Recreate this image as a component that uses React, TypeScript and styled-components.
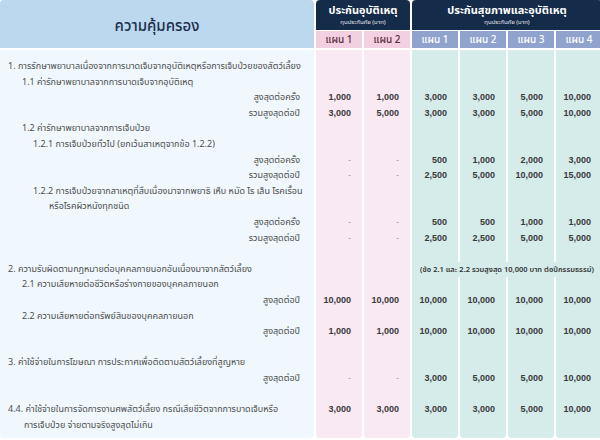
import React from 'react';
import styled, { createGlobalStyle } from 'styled-components';

const GlobalStyle = createGlobalStyle`
  html, body {
    margin: 0;
    padding: 0;
    background: #ffffff;
    overflow: hidden;
  }
  body {
    width: 600px;
    height: 440px;
    font-family: "Noto Sans Thai", "Noto Sans", "Liberation Sans", sans-serif;
  }
`;

type Kind = 'label' | 'accident' | 'health';

const COLUMNS = '314px repeat(6, 46px)';

const Page = styled.div`
  width: 602px;
  display: flex;
  flex-direction: column;
  gap: 2px;
`;

const Head = styled.div`
  display: grid;
  grid-template-columns: ${COLUMNS};
  grid-template-rows: 30px 17px;
  column-gap: 2px;
  row-gap: 1px;
`;

const TitleCell = styled.div`
  grid-row: 1 / span 2;
  background: #bcd8ee;
  border-radius: 4px 4px 0 0;
  display: flex;
  align-items: center;
  justify-content: center;
  padding-top: 5px;
  font-size: 15px;
  font-weight: 500;
  color: #1c2f4d;
`;

const GroupCell = styled.div<{ $span: number }>`
  grid-column: span ${(p) => p.$span};
  background: #142b4a;
  border-radius: 4px 4px 0 0;
  color: #ffffff;
  display: flex;
  flex-direction: column;
  align-items: center;
  justify-content: center;
  gap: 1px;
  padding-top: 1px;
`;

const GroupTitle = styled.div`
  font-size: 11px;
  font-weight: 700;
  line-height: 14px;
`;

const GroupSub = styled.div`
  font-size: 6px;
  line-height: 8px;
  opacity: 0.9;
`;

const PlanCell = styled.div<{ $kind: Kind }>`
  background: ${(p) => (p.$kind === 'accident' ? '#f2d0e1' : '#8fa3cd')};
  color: ${(p) => (p.$kind === 'accident' ? '#5c2a3d' : '#ffffff')};
  display: flex;
  align-items: center;
  justify-content: center;
  font-size: 10px;
  font-weight: 500;
`;

const Body = styled.div<{ $rows: number }>`
  display: grid;
  grid-template-columns: ${COLUMNS};
  grid-template-rows: 9px repeat(${(p) => p.$rows}, 15.6px) 5px;
  column-gap: 2px;
`;

const bg = (k: Kind) =>
  k === 'label' ? '#f0f8fd' : k === 'accident' ? '#f8e9f2' : '#d6eceb';

const Spacer = styled.div<{ $kind: Kind; $last?: boolean }>`
  background: ${(p) => bg(p.$kind)};
  border-radius: ${(p) => (p.$last ? '0 0 4px 4px' : '0')};
`;

const Label = styled.div<{ $indent: number; $right?: boolean }>`
  background: ${bg('label')};
  padding-left: ${(p) => p.$indent}px;
  padding-right: 14px;
  text-align: ${(p) => (p.$right ? 'right' : 'left')};
  font-size: 9px;
  line-height: 15.6px;
  color: #4d4d4d;
  white-space: nowrap;
  overflow: hidden;
`;

const Value = styled.div<{ $kind: Kind; $dash?: boolean }>`
  background: ${(p) => bg(p.$kind)};
  padding-right: 11px;
  text-align: right;
  font-family: "Liberation Sans", Arial, sans-serif;
  font-size: 9px;
  font-weight: ${(p) => (p.$dash ? 400 : 700)};
  line-height: 15.6px;
  color: ${(p) => (p.$dash ? '#9a9a9a' : '#3a3a3a')};
`;

const Note = styled.div`
  grid-column: span 4;
  background: ${bg('health')};
  text-align: center;
  font-size: 7.5px;
  font-weight: 600;
  line-height: 15.6px;
  color: #333333;
  white-space: nowrap;
`;

type Line = {
  label?: string;
  indent?: number;
  right?: boolean;
  values?: string[];
  note?: string;
};

const lines: Line[] = [
  { label: '1. การรักษาพยาบาลเนื่องจากการบาดเจ็บจากอุบัติเหตุหรือการเจ็บป่วยของสัตว์เลี้ยง', indent: 8 },
  { label: '1.1 ค่ารักษาพยาบาลจากการบาดเจ็บจากอุบัติเหตุ', indent: 22 },
  { label: 'สูงสุดต่อครั้ง', right: true, values: ['1,000', '1,000', '3,000', '3,000', '5,000', '10,000'] },
  { label: 'รวมสูงสุดต่อปี', right: true, values: ['3,000', '5,000', '3,000', '3,000', '5,000', '10,000'] },
  { label: '1.2 ค่ารักษาพยาบาลจากการเจ็บป่วย', indent: 22 },
  { label: '1.2.1 การเจ็บป่วยทั่วไป (ยกเว้นสาเหตุจากข้อ 1.2.2)', indent: 33 },
  { label: 'สูงสุดต่อครั้ง', right: true, values: ['-', '-', '500', '1,000', '2,000', '3,000'] },
  { label: 'รวมสูงสุดต่อปี', right: true, values: ['-', '-', '2,500', '5,000', '10,000', '15,000'] },
  { label: '1.2.2 การเจ็บป่วยจากสาเหตุที่สืบเนื่องมาจากพยาธิ เห็บ หมัด ไร เล็น โรคเรื้อน', indent: 33 },
  { label: 'หรือโรคผิวหนังทุกชนิด', indent: 49 },
  { label: 'สูงสุดต่อครั้ง', right: true, values: ['-', '-', '500', '500', '1,000', '1,000'] },
  { label: 'รวมสูงสุดต่อปี', right: true, values: ['-', '-', '2,500', '2,500', '5,000', '5,000'] },
  {},
  {
    label: '2. ความรับผิดตามกฎหมายต่อบุคคลภายนอกอันเนื่องมาจากสัตว์เลี้ยง',
    indent: 8,
    note: '(ข้อ 2.1 และ 2.2 รวมสูงสุด 10,000 บาท ต่อปีกรรมธรรม์)',
  },
  { label: '2.1 ความเสียหายต่อชีวิตหรือร่างกายของบุคคลภายนอก', indent: 22 },
  { label: 'สูงสุดต่อปี', right: true, values: ['10,000', '10,000', '10,000', '10,000', '10,000', '10,000'] },
  { label: '2.2 ความเสียหายต่อทรัพย์สินของบุคคลภายนอก', indent: 22 },
  { label: 'สูงสุดต่อปี', right: true, values: ['1,000', '1,000', '10,000', '10,000', '10,000', '10,000'] },
  {},
  { label: '3. ค่าใช้จ่ายในการโฆษณา การประกาศเพื่อติดตามสัตว์เลี้ยงที่สูญหาย', indent: 8 },
  { label: 'สูงสุดต่อปี', right: true, values: ['-', '-', '3,000', '5,000', '5,000', '10,000'] },
  {},
  {
    label: '4.4. ค่าใช้จ่ายในการจัดการงานศพสัตว์เลี้ยง กรณีเสียชีวิตจากการบาดเจ็บหรือ',
    indent: 8,
    values: ['3,000', '3,000', '3,000', '3,000', '5,000', '10,000'],
  },
  { label: 'การเจ็บป่วย จ่ายตามจริงสูงสุดไม่เกิน', indent: 24 },
];

const kinds: Kind[] = ['label', 'accident', 'accident', 'health', 'health', 'health', 'health'];

function Row({ line }: { line: Line }) {
  const cells: React.ReactNode[] = [
    <Label key="l" $indent={line.indent ?? 8} $right={line.right}>
      {line.label}
    </Label>,
  ];
  for (let c = 1; c <= 2; c++) {
    const v = line.values?.[c - 1];
    cells.push(
      <Value key={c} $kind="accident" $dash={v === '-'}>
        {v}
      </Value>
    );
  }
  if (line.note) {
    cells.push(<Note key="n">{line.note}</Note>);
  } else {
    for (let c = 3; c <= 6; c++) {
      const v = line.values?.[c - 1];
      cells.push(
        <Value key={c} $kind="health" $dash={v === '-'}>
          {v}
        </Value>
      );
    }
  }
  return <>{cells}</>;
}

export default function App() {
  return (
    <>
      <GlobalStyle />
      <Page>
        <Head>
          <TitleCell>ความคุ้มครอง</TitleCell>
          <GroupCell $span={2}>
            <GroupTitle>ประกันอุบัติเหตุ</GroupTitle>
            <GroupSub>ทุนประกันภัย (บาท)</GroupSub>
          </GroupCell>
          <GroupCell $span={4}>
            <GroupTitle>ประกันสุขภาพและอุบัติเหตุ</GroupTitle>
            <GroupSub>ทุนประกันภัย (บาท)</GroupSub>
          </GroupCell>
          <PlanCell $kind="accident">แผน 1</PlanCell>
          <PlanCell $kind="accident">แผน 2</PlanCell>
          <PlanCell $kind="health">แผน 1</PlanCell>
          <PlanCell $kind="health">แผน 2</PlanCell>
          <PlanCell $kind="health">แผน 3</PlanCell>
          <PlanCell $kind="health">แผน 4</PlanCell>
        </Head>
        <Body $rows={lines.length}>
          {kinds.map((k, i) => (
            <Spacer key={'t' + i} $kind={k} />
          ))}
          {lines.map((line, i) => (
            <Row key={i} line={line} />
          ))}
          {kinds.map((k, i) => (
            <Spacer key={'b' + i} $kind={k} $last />
          ))}
        </Body>
      </Page>
    </>
  );
}
